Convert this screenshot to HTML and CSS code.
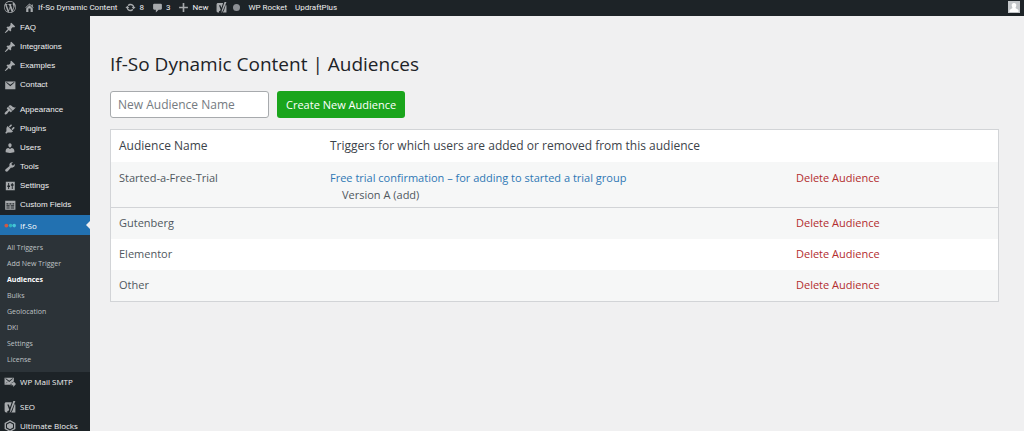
FILE: index.html
```
<!DOCTYPE html>
<html lang="en">
<head>
<meta charset="utf-8">
<meta name="viewport" content="width=device-width, initial-scale=1">
<title>If-So Dynamic Content | Audiences</title>
<link rel="stylesheet" href="styles.css">
</head>
<body>
<svg class="sprite" aria-hidden="true">
  <symbol id="wp" viewBox="0 0 20 20"><path d="M20 10c0-5.51-4.49-10-10-10C4.48 0 0 4.49 0 10c0 5.52 4.48 10 10 10 5.51 0 10-4.48 10-10zM7.78 15.37L4.37 6.22c.55-.02 1.17-.08 1.17-.08.5-.06.44-1.13-.06-1.11 0 0-1.45.11-2.37.11-.18 0-.37 0-.58-.01C4.12 2.69 6.87 1.11 10 1.11c2.33 0 4.45.87 6.05 2.34-.68-.11-1.65.39-1.65 1.58 0 .74.45 1.36.9 2.1.35.61.55 1.36.55 2.46 0 1.49-1.4 5-1.4 5l-3.03-8.37c.54-.02.82-.17.82-.17.5-.05.44-1.25-.06-1.22 0 0-1.44.12-2.38.12-.87 0-2.33-.12-2.33-.12-.5-.03-.56 1.2-.06 1.22l.92.08 1.26 3.41zM17.41 10c.24-.64.74-1.87.43-4.25.7 1.29 1.05 2.71 1.05 4.25 0 3.29-1.73 6.24-4.4 7.78.97-2.59 1.94-5.2 2.92-7.78zM6.1 18.09C3.12 16.65 1.11 13.53 1.11 10c0-1.3.23-2.48.72-3.59C3.25 10.3 4.67 14.2 6.1 18.09zm4.03-6.63l2.58 6.98c-.86.29-1.76.45-2.71.45-.79 0-1.57-.11-2.29-.33.81-2.38 1.62-4.74 2.42-7.1z"/></symbol>
  <symbol id="home" viewBox="0 0 20 20"><path d="M16 8.5l1.53 1.53-1.06 1.06L10 4.6l-6.47 6.49-1.06-1.06L10 2.5l4 4v-2h2v4zm-6-2.46l6 5.99V18h-4v-6H8v6H4v-5.97z"/></symbol>
  <symbol id="update" viewBox="0 0 20 20"><path d="M10.2 3.28c3.53 0 6.43 2.61 6.92 6h2.08l-3.5 4-3.5-4h2.32c-.45-1.97-2.21-3.45-4.32-3.45-1.45 0-2.73.71-3.54 1.78L4.95 5.66C6.23 4.2 8.11 3.28 10.2 3.28zm-.4 13.44c-3.52 0-6.43-2.61-6.92-6H.8l3.5-4 3.5 4H5.48c.45 1.97 2.21 3.45 4.32 3.45 1.45 0 2.73-.71 3.54-1.78l1.71 1.95c-1.28 1.46-3.15 2.38-5.25 2.38z"/></symbol>
  <symbol id="comment" viewBox="0 0 20 20"><path d="M4 3h12q2 0 2 2v7q0 2-2 2h-4l-5 5v-5H4q-2 0-2-2V5q0-2 2-2z"/></symbol>
  <symbol id="plus" viewBox="0 0 20 20"><path d="M8.500 2h3v6.500H18v3h-6.500V18h-3v-6.500H2v-3h6.500z"/></symbol>
  <symbol id="yoast" viewBox="0 0 20 20"><path fill-rule="evenodd" d="M4 2h9l-3.200 8.800L8 6H5.500l3.100 8c-.5 1.700-1.400 2.500-3 2.500V19h-2C2 19 1 18 1 16V5c0-2 1-3 3-3zM15.500 0H19L12.500 16c-.8 2-1.800 3.200-3.500 3.800 1.200-1.500 1.700-3 1.500-5zM17.800 5c.8.500 1.200 1.200 1.200 2v12h-7c1.200-1 1.800-2 2.400-3.500z"/></symbol>
  <symbol id="pin" viewBox="0 0 20 20"><path d="M10.440 3.020l1.820-1.820 6.360 6.350-1.830 1.820c-1.050-.68-2.480-.57-3.410.36l-.75.75c-.92.930-1.040 2.350-.35 3.410l-1.830 1.820-2.410-2.410-2.800 2.790c-.42.42-3.380 2.710-3.800 2.290s1.860-3.390 2.280-3.810l2.790-2.790L4.100 9.360l1.830-1.820c1.050.69 2.480.57 3.400-.36l.75-.75c.93-.92 1.050-2.350.36-3.410z"/></symbol>
  <symbol id="mail" viewBox="0 0 20 20"><path fill-rule="evenodd" d="M2 4h17v13H2zM3.500 5.800l7 6.200 7-6.200-.8-.8-6.200 4.500L4.300 5z"/></symbol>
  <symbol id="brush" viewBox="0 0 20 20"><path d="M14.480 11.060L7.410 3.990l1.500-1.500c.5-.56 2.300-.47 3.510.32 1.210.8 1.430 1.280 2.910 2.100 1.180.64 2.450 1.260 4.450.85zm-.71.71L6.700 4.700 4.930 6.470c-.39.39-.39 1.020 0 1.410l1.060 1.060c.39.39.39 1.030 0 1.420-.6.6-1.430 1.110-2.210 1.690-.35.26-.7.53-1.010.84C1.430 14.230.4 16.080 1.400 17.070c.99 1 2.840-.03 4.180-1.360.31-.31.58-.66.85-1.020.57-.78 1.080-1.610 1.690-2.210.39-.39 1.020-.39 1.410 0l1.060 1.060c.39.39 1.020.39 1.410 0z"/></symbol>
  <symbol id="plug" viewBox="0 0 20 20"><path d="M13.110 4.360L9.870 7.600 8 5.730l3.240-3.240c.35-.34 1.050-.2 1.560.32.52.51.66 1.210.31 1.550zm-8 1.770l.91-1.120 9.010 9.010-1.190.84c-.71.71-2.630 1.160-3.820 1.160H6.140L4.900 17.260c-.59.59-1.540.59-2.120 0-.59-.58-.59-1.530 0-2.120l1.240-1.240v-3.880c0-1.130.4-3.190 1.090-3.890zm7.260 3.970l3.240-3.240c.34-.35 1.040-.21 1.550.31.52.51.66 1.210.31 1.550l-3.240 3.250z"/></symbol>
  <symbol id="user" viewBox="0 0 20 20"><path d="M10 9.250c-2.270 0-2.730-3.440-2.730-3.440C7 4.020 7.820 2 9.970 2c2.160 0 2.980 2.020 2.710 3.810 0 0-.41 3.440-2.680 3.440zm0 2.570L12.720 10c2.390 0 4.520 2.330 4.520 4.530v2.490s-3.650 1.130-7.240 1.130c-3.650 0-7.240-1.130-7.240-1.130v-2.490c0-2.250 1.940-4.480 4.470-4.480z"/></symbol>
  <symbol id="wrench" viewBox="0 0 20 20"><path d="M16.680 9.770c-1.340 1.340-3.300 1.670-4.950.99l-5.410 6.520c-.99.99-2.590.99-3.580 0s-.99-2.590 0-3.570l6.520-5.420c-.68-1.650-.35-3.610.99-4.950 1.280-1.280 3.120-1.620 4.720-1.060l-2.890 2.890 2.820 2.820 2.860-2.870c.53 1.580.18 3.390-1.080 4.650z"/></symbol>
  <symbol id="sliders" viewBox="0 0 20 20"><path fill-rule="evenodd" d="M3 3h15v14H3zM7 5v4H5.500v2.500H7V15h1.500v-3.500H10V9H8.500V5zM13 5v2h-1.500v2.500H13V15h1.500V9.500H16V7h-1.500V5z"/></symbol>
  <symbol id="fields" viewBox="0 0 20 20"><path fill-rule="evenodd" d="M2 3h17v15H2zM4 7v2h3.500V7zM9 7v2h3.500V7zM14 7v2h3V7zM4 10.500v2h5.500v-2zM11 10.500v2h6v-2zM4 14v2h5.500v-2zM11 14v2h6v-2z"/></symbol>
  <symbol id="dots" viewBox="0 0 20 20"><circle cx="4" cy="11" r="3.200" fill="#d05a45"/><circle cx="11" cy="11" r="3" fill="#2fb5c0"/><circle cx="17" cy="11" r="3" fill="#45c5d8"/></symbol>
  <symbol id="mailout" viewBox="0 0 22 20"><path fill-rule="evenodd" d="M1 2h17v8h-4v5H1zM2.500 4l7 6 7-6-.7-.8-6.300 4.500-6.300-4.500zM2.500 13.500l4-3.500-.8-.6zM14 11h3V8l5 5.500-5 5.500v-3h-5v-3h2z"/></symbol>
  <symbol id="blocks" viewBox="0 0 20 20"><path fill-rule="evenodd" d="M10 0l9 5v10l-9 5-9-5V5zM10 2.500L3.300 6.200v7.600L10 17.500l6.700-3.700V6.200zM10 4.500l5 2.800v5.400l-5 2.800-5-2.800V7.300z"/></symbol>
</svg>

<header class="bar">
  <nav class="bar-nav" aria-label="Toolbar">
    <a class="bar-link" href="#" aria-label="WordPress"><svg class="icon icon-wp"><use href="#wp"/></svg></a>
    <a class="bar-link" href="#"><svg class="icon"><use href="#home"/></svg>If-So Dynamic Content</a>
    <a class="bar-link" href="#"><svg class="icon"><use href="#update"/></svg>8</a>
    <a class="bar-link" href="#"><svg class="icon"><use href="#comment"/></svg>3</a>
    <a class="bar-link" href="#"><svg class="icon"><use href="#plus"/></svg>New</a>
    <a class="bar-link seo" href="#" aria-label="SEO"><svg class="icon"><use href="#yoast"/></svg><span class="score"></span></a>
    <a class="bar-link" href="#">WP Rocket</a>
    <a class="bar-link" href="#">UpdraftPlus</a>
  </nav>
  <a class="avatar" href="#" aria-label="Profile"><svg viewBox="0 0 12 12"><path fill="#c3c6c9" d="M0 0h12v12H0z"/><path fill="#fff" d="M6 2c2 0 2.500 1.500 2.200 3L7.500 7l3 2v2h-9V9l3-2-.7-2C3.500 3.500 4 2 6 2z"/></svg></a>
</header>

<div class="shell">
  <nav class="side" aria-label="Main menu">
    <ul class="menu">
      <li><a class="item" href="#"><svg class="icon"><use href="#pin"/></svg>FAQ</a></li>
      <li><a class="item" href="#"><svg class="icon"><use href="#pin"/></svg>Integrations</a></li>
      <li><a class="item" href="#"><svg class="icon"><use href="#pin"/></svg>Examples</a></li>
      <li><a class="item" href="#"><svg class="icon"><use href="#mail"/></svg>Contact</a></li>
    </ul>
    <ul class="menu">
      <li><a class="item" href="#"><svg class="icon"><use href="#brush"/></svg>Appearance</a></li>
      <li><a class="item" href="#"><svg class="icon"><use href="#plug"/></svg>Plugins</a></li>
      <li><a class="item" href="#"><svg class="icon"><use href="#user"/></svg>Users</a></li>
      <li><a class="item" href="#"><svg class="icon"><use href="#wrench"/></svg>Tools</a></li>
      <li><a class="item" href="#"><svg class="icon"><use href="#sliders"/></svg>Settings</a></li>
      <li><a class="item" href="#"><svg class="icon"><use href="#fields"/></svg>Custom Fields</a></li>
      <li><a class="item active" href="#"><svg class="icon"><use href="#dots"/></svg>If-So</a>
        <ul class="submenu">
          <li><a href="#">All Triggers</a></li>
          <li><a href="#">Add New Trigger</a></li>
          <li><a class="current" href="#" aria-current="page">Audiences</a></li>
          <li><a href="#">Bulks</a></li>
          <li><a href="#">Geolocation</a></li>
          <li><a href="#">DKI</a></li>
          <li><a href="#">Settings</a></li>
          <li><a href="#">License</a></li>
        </ul>
      </li>
      <li><a class="item alt" href="#"><svg class="icon"><use href="#mailout"/></svg>WP Mail SMTP</a></li>
    </ul>
    <ul class="menu">
      <li><a class="item alt" href="#"><svg class="icon"><use href="#yoast"/></svg>SEO</a></li>
      <li><a class="item alt" href="#"><svg class="icon"><use href="#blocks"/></svg>Ultimate Blocks</a></li>
    </ul>
  </nav>

  <main class="content">
    <h1>If-So Dynamic Content | Audiences</h1>
    <form class="create">
      <input class="name" type="text" placeholder="New Audience Name" aria-label="New Audience Name">
      <button class="submit" type="button">Create New Audience</button>
    </form>
    <table class="audiences">
      <thead>
        <tr><th class="col-name" scope="col">Audience Name</th><th class="col-triggers" scope="col">Triggers for which users are added or removed from this audience</th><td></td></tr>
      </thead>
      <tbody>
        <tr class="shaded ruled"><td>Started-a-Free-Trial</td><td><a class="trigger" href="#">Free trial confirmation – for adding to started a trial group</a><div class="version">Version A (add)</div></td><td><a class="delete" href="#">Delete Audience</a></td></tr>
        <tr class="shaded"><td>Gutenberg</td><td></td><td><a class="delete" href="#">Delete Audience</a></td></tr>
        <tr><td>Elementor</td><td></td><td><a class="delete" href="#">Delete Audience</a></td></tr>
        <tr class="shaded"><td>Other</td><td></td><td><a class="delete" href="#">Delete Audience</a></td></tr>
      </tbody>
    </table>
  </main>
</div>
</body>
</html>
```

FILE: styles.css
```
* { box-sizing: border-box; }
body {
  margin: 0;
  min-height: 100vh;
  background: #f0f0f1;
  color: #50575e;
  font-family: "Open Sans", "Noto Sans", sans-serif;
  font-size: 12px;
}
a { color: inherit; text-decoration: none; }
ul { list-style: none; margin: 0; padding: 0; }
.sprite { display: none; }
.icon { width: 11px; height: 11px; fill: #a7aaad; flex: none; }

.bar {
  display: flex;
  align-items: center;
  justify-content: space-between;
  height: 16px;
  padding: 0 4px 2px;
  background: #1d2327;
  color: #f0f0f1;
  font-family: Roboto, "Open Sans", sans-serif;
  font-size: 8px;
}
.bar-nav { display: flex; align-items: center; gap: 8px; }
.bar-link { display: flex; align-items: center; gap: 3px; white-space: nowrap; }
.icon-wp { width: 12px; height: 12px; }
.score { width: 7px; height: 7px; border-radius: 50%; background: #8c8f94; }
.seo { gap: 6px; }
.avatar { display: flex; width: 12px; height: 12px; }

.shell { display: flex; height: calc(100vh - 16px); }
.side {
  flex: none;
  width: 90px;
  padding-top: 2px;
  overflow: hidden;
  background: #1d2327;
  color: #f0f0f1;
}
.side .icon { width: 12px; height: 12px; }
.menu + .menu { margin-top: 6px; }
.item {
  display: flex;
  align-items: center;
  gap: 4px;
  height: 19px;
  padding-left: 4px;
  font-family: "Liberation Sans", Arial, sans-serif;
  font-size: 8px;
  white-space: nowrap;
}
.item.alt, .item.active { font-family: "Open Sans", "Noto Sans", sans-serif; }
.item.active { position: relative; height: 20px; margin-top: 1px; background: #2271b1; color: #fff; }
.item.active::after {
  content: "";
  position: absolute;
  top: 6px;
  right: 0;
  border: 4px solid transparent;
  border-right-color: #f0f0f1;
  border-left-width: 0;
}
.submenu { padding: 5px 0 4px; background: #2c3338; color: #bfc2c5; font-size: 7px; }
.submenu a { display: block; padding-left: 7px; line-height: 16px; }
.submenu .current { color: #fff; font-weight: 700; }

.content { flex: 1; min-width: 0; padding: 36px 25px 0 20px; }
h1 { margin: 0; color: #1d2327; font-size: 19px; font-weight: 400; line-height: 24px; }
.create { display: flex; gap: 8px; margin: 15px 0 11px; }
.name, .submit { height: 27px; border-radius: 3px; font-family: inherit; font-size: 12px; }
.name { width: 159px; padding: 0 7px; border: 1px solid #a7aaad; background: #fff; color: #2c3338; }
.name::placeholder { color: #757b81; opacity: 1; }
.submit { padding: 0 9px; border: 0; background: #1aa51c; color: #fff; font-size: 11px; }

.audiences {
  width: 100%;
  border: 1px solid #d2d4d7;
  border-collapse: separate;
  border-spacing: 0;
  background: #fff;
  table-layout: fixed;
  font-size: 11px;
  line-height: 17px;
  text-align: left;
}
.audiences th, .audiences td { padding: 6px 8px 8px; font-weight: 400; vertical-align: top; }
.audiences th { padding: 7px 8px 8px; color: #3c434a; font-size: 12px; }
.audiences .col-name { width: 211px; }
.audiences .col-triggers { width: 466px; }
.shaded { background: #f6f7f7; }
.audiences .ruled td { padding: 7px 8px 4px; border-bottom: 1px solid #d2d4d7; }
.trigger { color: #2f77b5; }
.version { padding-left: 12px; }
.delete { color: #b32d2e; }
```
